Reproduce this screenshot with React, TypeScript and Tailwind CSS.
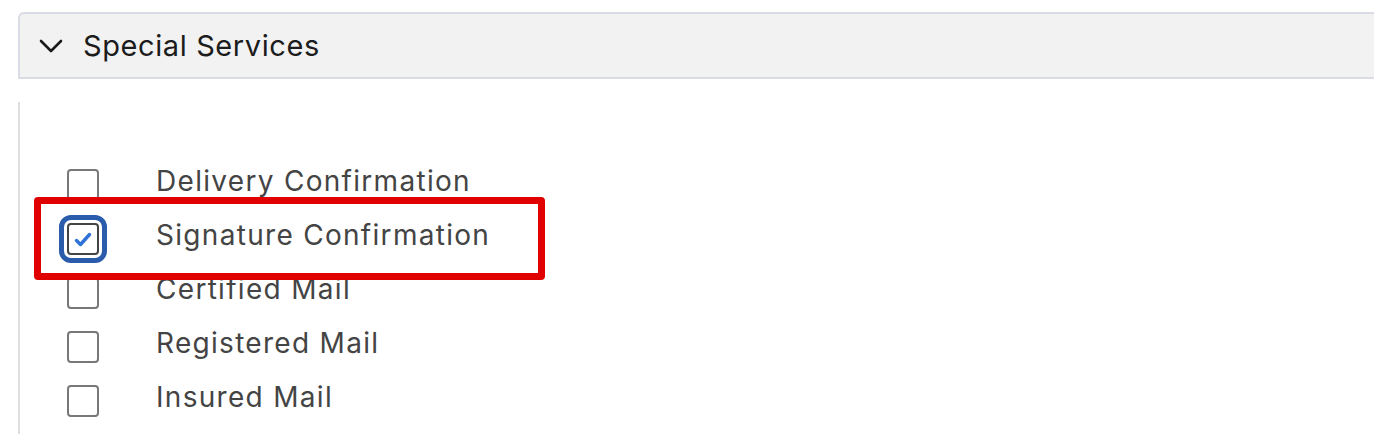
import React from "react";

const items = [
  { label: "Delivery Confirmation", checked: false },
  { label: "Signature Confirmation", checked: true },
  { label: "Certified Mail", checked: false },
  { label: "Registered Mail", checked: false },
  { label: "Insured Mail", checked: false },
];

export default function App() {
  return (
    <div
      className="w-[1374px] h-[434px] overflow-hidden bg-white pl-[18px] pt-[12px]"
      style={{ fontFamily: "Inter, 'Liberation Sans', sans-serif" }}
    >
      <div className="flex items-center h-[67px] bg-[#f2f2f2] border-2 border-r-0 border-[#d9dce4] rounded-tl-[6px] pl-[19px] w-[1400px]">
        <svg width="24" height="16" viewBox="0 0 24 16">
          <path d="M2 3 L12 13 L22 3" fill="none" stroke="#1a1a1a" strokeWidth="2.6" strokeLinecap="round" strokeLinejoin="round" />
        </svg>
        <span className="ml-[20px] text-[29px] tracking-[0.6px] text-[#1c1c1c] leading-none">Special Services</span>
      </div>
      <div className="relative mt-[23px] border-l-2 border-[#dedede] h-[340px] pt-[56px] pl-[47px]">
        <div className="flex flex-col">
          {items.map((it) => (
            <div key={it.label} className="flex items-center h-[54px]">
              {it.checked ? (
                <div className="w-[32px] h-[32px] rounded-[4px] border-2 border-[#444] outline-[5px] outline-solid outline-[#2a5cab] outline-offset-[3px] flex items-center justify-center">
                  <svg width="18" height="15" viewBox="0 0 18 15" className="mt-[1px]">
                    <path d="M2.5 8.5 L6.5 12.5 L15.5 2.5" fill="none" stroke="#2f72d8" strokeWidth="3.4" strokeLinecap="round" strokeLinejoin="round" />
                  </svg>
                </div>
              ) : (
                <div className="w-[32px] h-[32px] rounded-[4px] border-2 border-[#787878]" />
              )}
              <span className="ml-[57px] mb-[8px] text-[28px] tracking-[1.3px] text-[#444] leading-none">{it.label}</span>
            </div>
          ))}
        </div>
        <div className="absolute left-[14px] top-[95px] w-[511px] h-[83px] border-[7px] border-[#e00000] rounded-[4px]" />
      </div>
    </div>
  );
}
